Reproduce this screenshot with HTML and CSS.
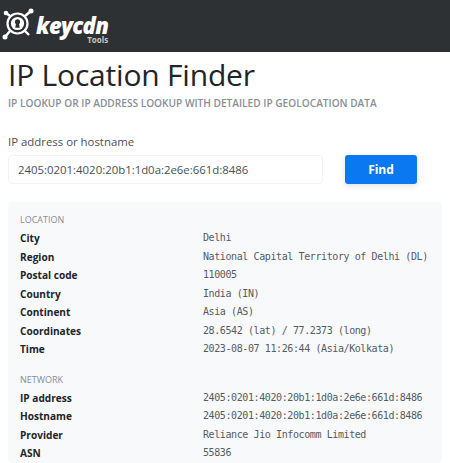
FILE: index.html
```html
<!DOCTYPE html>
<html lang="en">
<head>
    <meta charset="UTF-8">
    <meta name="viewport" content="width=device-width, initial-scale=1.0">
    <title>IP Location Finder</title>
    <link rel="stylesheet" href="styles.css">
</head>
<body>
    <!-- Top bar -->
    <header class="topbar">
        <a class="brand" href="#">
            <svg class="brand-icon" width="36" height="52" viewBox="0 0 36 52">
                <g fill="none" stroke="#fff">
                    <circle cx="17.5" cy="23.5" r="10" stroke-width="2.2"/>
                    <path d="M10 16 6 13M25 16 31 11M10 31 5 37M25 31 29 35" stroke-width="2.4"/>
                </g>
                <g fill="#fff">
                    <circle cx="6" cy="13" r="2.3"/>
                    <circle cx="31" cy="11" r="2.5"/>
                    <circle cx="5" cy="37" r="2.5"/>
                    <circle cx="17.5" cy="23.5" r="6.6"/>
                </g>
                <g fill="#2e3134">
                    <circle cx="17.5" cy="21.8" r="2.6"/>
                    <path d="M16.2 22.5h2.6l1 5.2h-4.6z"/>
                </g>
            </svg>
            <span class="brand-text">
                <span class="brand-name">keycdn</span>
                <span class="brand-sub">Tools</span>
            </span>
        </a>
    </header>

    <main class="container">
        <h1>IP Location Finder</h1>
        <p class="subtitle">IP lookup or IP address lookup with detailed IP geolocation data</p>

        <form class="lookup">
            <label class="lookup-label" for="host">IP address or hostname</label>
            <div class="lookup-row">
                <input class="lookup-input" id="host" type="text" value="2405:0201:4020:20b1:1d0a:2e6e:661d:8486">
                <button class="find-button" type="button">Find</button>
            </div>
        </form>

        <!-- Results -->
        <section class="results">
            <h2>Location</h2>
            <dl>
                <dt>City</dt><dd>Delhi</dd>
                <dt>Region</dt><dd>National Capital Territory of Delhi (DL)</dd>
                <dt>Postal code</dt><dd>110005</dd>
                <dt>Country</dt><dd>India (IN)</dd>
                <dt>Continent</dt><dd>Asia (AS)</dd>
                <dt>Coordinates</dt><dd>28.6542 (lat) / 77.2373 (long)</dd>
                <dt>Time</dt><dd>2023-08-07 11:26:44 (Asia/Kolkata)</dd>
            </dl>
            <h2 class="second">Network</h2>
            <dl>
                <dt>IP address</dt><dd>2405:0201:4020:20b1:1d0a:2e6e:661d:8486</dd>
                <dt>Hostname</dt><dd>2405:0201:4020:20b1:1d0a:2e6e:661d:8486</dd>
                <dt>Provider</dt><dd>Reliance Jio Infocomm Limited</dd>
                <dt>ASN</dt><dd>55836</dd>
            </dl>
        </section>
    </main>
</body>
</html>
```

FILE: styles.css
```css
/* General */
html, body {
    height: 100%;
    overflow: hidden;
}

body {
    margin: 0;
    font-family: "Open Sans", "Noto Sans", sans-serif;
    color: #212529;
    background-color: #fff;
}

/* Top bar */
.topbar {
    height: 52px;
    background-color: #2e3134;
}

.brand {
    display: flex;
    color: #fff;
    text-decoration: none;
}

.brand-text {
    display: flex;
    flex-direction: column;
    margin-top: 15px;
}

.brand-name {
    font: italic 800 22px/21px "Open Sans", sans-serif;
    letter-spacing: -0.7px;
}

.brand-sub {
    align-self: flex-end;
    font-size: 8px;
    line-height: 8px;
    font-weight: 700;
    color: #c9c9c2;
}

/* Main column */
.container {
    padding: 0 8px;
}

h1 {
    margin: 4px 0 0;
    font-size: 30px;
    line-height: 37px;
    font-weight: 400;
    letter-spacing: -0.2px;
}

.subtitle {
    margin: 3px 0 0;
    font-size: 10.15px;
    line-height: 14px;
    font-weight: 600;
    text-transform: uppercase;
    color: #868e96;
}

/* Search form */
.lookup {
    margin-top: 23px;
}

.lookup-label {
    display: block;
    font-size: 11.4px;
    line-height: 18px;
    color: #495057;
}

.lookup-row {
    display: flex;
    margin-top: 4px;
}

.lookup-input {
    width: 315px;
    height: 29px;
    box-sizing: border-box;
    padding: 0 9px;
    border: 1px solid #f1f3f5;
    border-radius: 4px;
    font-family: inherit;
    font-size: 11.4px;
    color: #495057;
    background-color: #fff;
}

.find-button {
    width: 72px;
    height: 29px;
    margin-left: 22px;
    padding: 0;
    border: none;
    border-radius: 3px;
    font-family: inherit;
    font-size: 12px;
    font-weight: 700;
    color: #fff;
    background-color: #0a78f0;
    box-shadow: 0 2px 6px rgba(0, 0, 0, 0.12);
}

/* Results */
.results {
    margin-top: 18px;
    padding: 8px 12px 0;
    border-radius: 4px;
    background-color: #f8f9fa;
}

.results h2 {
    margin: 0;
    font-size: 9px;
    line-height: 19px;
    font-weight: 400;
    text-transform: uppercase;
    color: #868e96;
}

.results h2.second {
    margin-top: 11px;
}

dl {
    display: grid;
    grid-template-columns: 183px 1fr;
    grid-auto-rows: 18.5px;
    margin: 0;
}

dt {
    font-size: 10.1px;
    line-height: 18.5px;
    font-weight: 700;
}

dd {
    margin: 0;
    font-family: "DejaVu Sans Mono", monospace;
    font-size: 10px;
    line-height: 17px;
    letter-spacing: -0.4px;
    color: #555b61;
}
```
